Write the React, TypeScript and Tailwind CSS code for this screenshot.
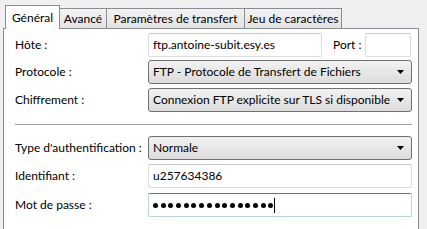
import React from 'react';

const font = { fontFamily: 'Lato, "Noto Sans", sans-serif' };

const Arrow = () => (
  <svg width="7" height="4" viewBox="0 0 7 4" className="shrink-0">
    <path d="M0 0H7L3.5 4Z" fill="#000" />
  </svg>
);

const Select: React.FC<{ value: string }> = ({ value }) => (
  <div className="flex h-[24px] flex-1 items-center justify-between rounded-[3px] border border-[#707070] bg-gradient-to-b from-[#f2f2f2] to-[#dcdcdc] pl-[4px] pr-[7px] text-[12px] text-black">
    <span className="whitespace-nowrap">{value}</span>
    <Arrow />
  </div>
);

const Field: React.FC<{ value: string; focused?: boolean; className?: string; children?: React.ReactNode }> = ({
  value,
  focused = false,
  className = '',
  children,
}) => (
  <div
    className={`flex h-[24px] items-center rounded-[2px] border bg-white pl-[4px] text-[12px] text-black ${
      focused ? 'border-[#b5d3ea] border-t-[#3d7bad]' : 'border-[#dcdde3] border-t-[#c6c8ce]'
    } ${className}`}
  >
    {value}
    {children}
  </div>
);

const Row: React.FC<{ label: string; className?: string; children: React.ReactNode }> = ({ label, className = '', children }) => (
  <div className={`flex items-center ${className}`}>
    <div className="w-[133px] shrink-0 whitespace-nowrap text-[12px] text-black">{label}</div>
    {children}
  </div>
);

export default function App() {
  const tabs = ['Avancé', 'Paramètres de transfert', 'Jeu de caractères'];
  const tabWidths = ['w-[47px]', 'w-[138px]', 'w-[97px]'];
  return (
    <div className="h-[229px] w-[427px] overflow-hidden bg-[#f0f0f0] pl-[3px] pt-[5px]" style={font}>
      {/* tab strip */}
      <div className="relative z-10 flex items-end pl-[2px]">
        <div className="-mb-px flex h-[24px] w-[55px] items-start justify-center border border-b-0 border-[#898c95] bg-white pt-[3px] text-[12px] text-black">
          Général
        </div>
        {tabs.map((t, i) => (
          <div
            key={t}
            className={`flex h-[20px] ${tabWidths[i]} items-center justify-center whitespace-nowrap border border-l-0 border-b-0 border-[#898c95] bg-gradient-to-b from-[#f2f2f2] to-[#e3e3e3] text-[12px] text-black`}
          >
            {t}
          </div>
        ))}
      </div>

      {/* panel */}
      <div className="h-[220px] w-[416px] border border-[#898c95] bg-white pl-[11px] pr-[6px] pt-[4px]">
        <Row label="Hôte :">
          <Field value="ftp.antoine-subit.esy.es" className="w-[174px]" />
          <span className="ml-[11px] w-[32px] text-[12px] text-black">Port :</span>
          <Field value="" className="w-[46px]" />
        </Row>
        <Row label="Protocole :" className="mt-[3px]">
          <Select value="FTP - Protocole de Transfert de Fichiers" />
        </Row>
        <Row label="Chiffrement :" className="mt-[4px]">
          <Select value="Connexion FTP explicite sur TLS si disponible" />
        </Row>
        <div className="mt-[12px] h-px bg-[#a0a0a0]" />
        <Row label="Type d'authentification :" className="mt-[11px]">
          <Select value="Normale" />
        </Row>
        <Row label="Identifiant :" className="mt-[4px]">
          <Field value="u257634386" className="flex-1" />
        </Row>
        <Row label="Mot de passe :" className="mt-[5px]">
          <Field value="" focused className="flex-1">
            <div className="flex gap-[2.7px]">
              {Array.from({ length: 16 }).map((_, i) => (
                <span key={i} className="h-[5px] w-[5px] rounded-full bg-black" />
              ))}
            </div>
            <span className="ml-[1px] h-[15px] w-px bg-black" />
          </Field>
        </Row>
      </div>
    </div>
  );
}
